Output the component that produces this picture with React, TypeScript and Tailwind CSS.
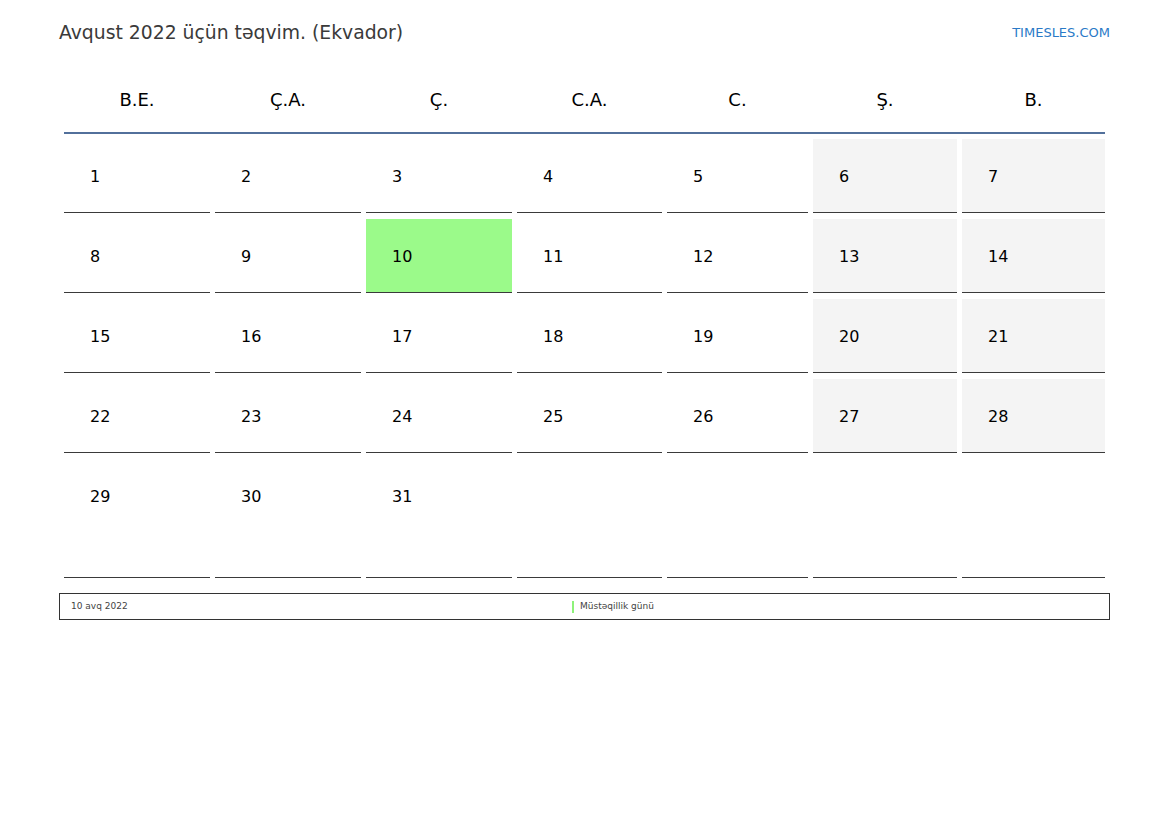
import React from 'react';

const DAYS = ['B.E.', 'Ç.A.', 'Ç.', 'C.A.', 'C.', 'Ş.', 'B.'];

// August 2022 starts on Monday, so the grid needs no leading blanks
const WEEKS: (number | null)[][] = [
  [1, 2, 3, 4, 5, 6, 7],
  [8, 9, 10, 11, 12, 13, 14],
  [15, 16, 17, 18, 19, 20, 21],
  [22, 23, 24, 25, 26, 27, 28],
  [29, 30, 31, null, null, null, null],
];

const HOLIDAY = 10;

const cols = 'grid grid-cols-[146px_146px_146px_145px_141px_144px_143px] gap-x-[5px]';

export default function App() {
  return (
    <div className="w-[1169px] h-[827px] bg-white px-[59px] font-['DejaVu_Sans',sans-serif]">
      {/* Title bar */}
      <div className="flex items-start justify-between pt-[21px]">
        <h1 className="text-[18.8px] leading-[24px] text-[#3a3a3a] font-normal">
          Avqust 2022 üçün təqvim. (Ekvador)
        </h1>
        <span className="mt-[4px] text-[13px] leading-[16px] text-[#2a7ac7]">TIMESLES.COM</span>
      </div>

      {/* Calendar */}
      <div className="mx-[5px] mt-[21px]">
        <div className={`${cols} h-[68px] items-center border-b-2 border-[#52709b]`}>
          {DAYS.map((d) => (
            <div key={d} className="text-center text-[18px] text-black">
              {d}
            </div>
          ))}
        </div>

        <div className={`${cols} gap-y-[6px] mt-[5px]`}>
          {WEEKS.map((week, wi) =>
            week.map((day, di) => {
              const weekend = di >= 5 && day !== null;
              const holiday = day === HOLIDAY;
              const last = wi === WEEKS.length - 1;
              return (
                <div
                  key={`${wi}-${di}`}
                  className={`${last ? 'h-[119px]' : 'h-[74px]'} border-b border-[#3a3a3a] pl-[26px] pt-[28px] text-[16px] leading-[20px] text-black ${
                    holiday ? 'bg-[#9bfa8a]' : weekend ? 'bg-[#f4f4f4]' : 'bg-white'
                  }`}
                >
                  {day}
                </div>
              );
            })
          )}
        </div>
      </div>

      {/* Legend */}
      <div className="mt-[15px] h-[27px] border border-[#333] flex items-center pl-[11px] text-[9px] text-[#444]">
        <span className="w-[501px]">10 avq 2022</span>
        <span className="w-[2px] h-[12px] bg-[#8ef27a] mr-[6px]" />
        <span>Müstəqillik günü</span>
      </div>
    </div>
  );
}
